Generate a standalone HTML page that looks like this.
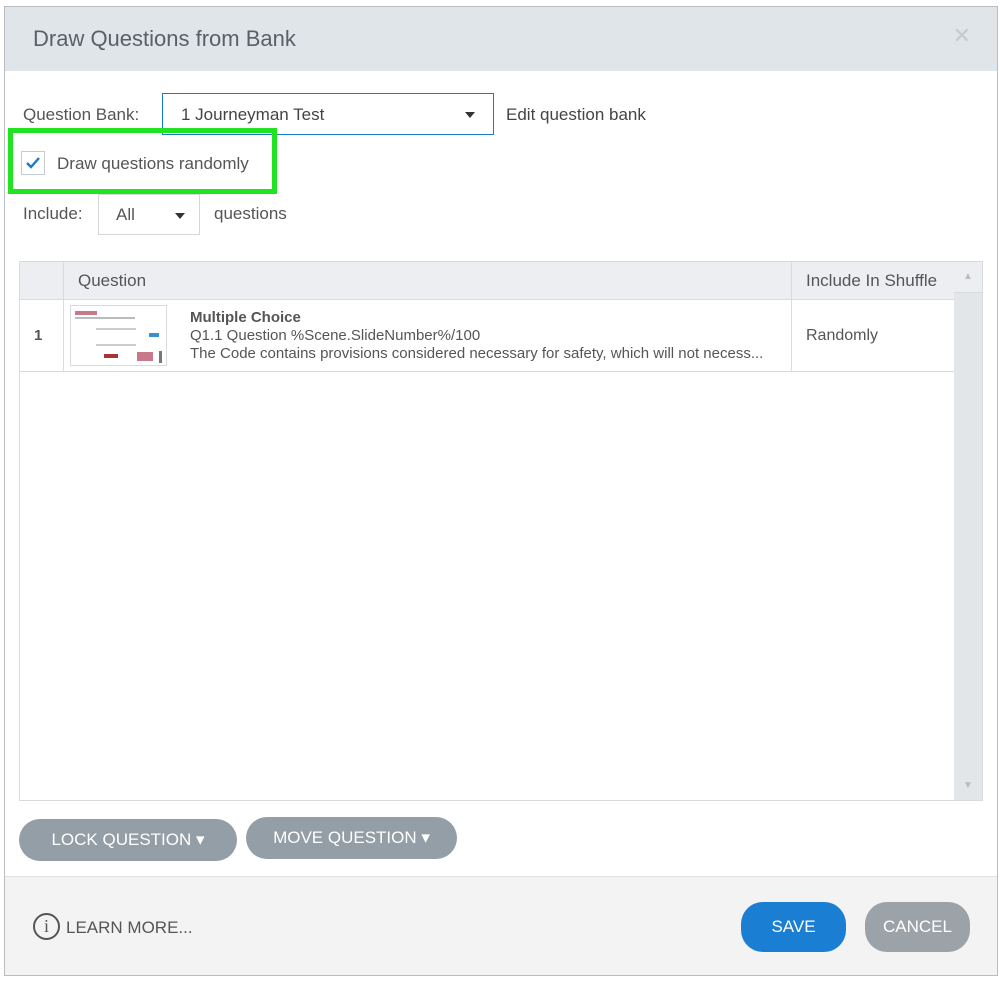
<!DOCTYPE html>
<html><head><style>
*{box-sizing:border-box;margin:0;padding:0}
body{width:999px;height:982px;background:#fff;font-family:"Liberation Sans",sans-serif;position:relative;overflow:hidden;color:#444}
.dlg{position:absolute;left:4px;top:6px;width:994px;height:970px;border:1px solid #b9bdc1;background:#fff}
.hdr{position:absolute;left:0;top:0;right:0;height:64px;background:#e0e5e9}
.ttl{position:absolute;left:28px;top:19px;font-size:22px;color:#5a6066}
.x{position:absolute;right:26px;top:16px;font-size:22px;color:#c5cacf}
.a{position:absolute}
.lbl{font-size:17px;color:#555}
.sel{position:absolute;border:1px solid #1a7ac9;background:#fff}
.tri{position:absolute;width:0;height:0;border-left:5px solid transparent;border-right:5px solid transparent;border-top:6px solid #333}
.tbl{position:absolute;width:964px;height:540px;border:1px solid #d8dbde;background:#fff}
.btn{position:absolute;border-radius:22px;color:#fff;font-size:17px;text-align:center}
.foot{position:absolute;left:0;top:869px;right:0;bottom:0;background:#f3f3f3;border-top:1px solid #e2e2e2}
</style></head><body>
<div class="dlg">
<div class="hdr"><div class="ttl">Draw Questions from Bank</div><div class="x">✕</div></div>
<div class="a lbl" style="left:18px;top:98px">Question Bank:</div>
<div class="sel" style="left:157px;top:86px;width:332px;height:42px"><span class="a lbl" style="left:18px;top:11px;color:#444">1 Journeyman Test</span><div class="tri" style="left:302px;top:18px"></div></div>
<div class="a lbl" style="left:501px;top:98px;color:#444">Edit question bank</div>
<div class="a" style="left:3px;top:121px;width:269px;height:66px;border:5px solid #22e322"></div>
<div class="a" style="left:16px;top:144px;width:24px;height:24px;border:1px solid #c7cbcf;background:#fff"><svg width="22" height="22" viewBox="0 0 22 22"><path d="M5 11 L9 15 L17 6" stroke="#1a7ac9" stroke-width="2.4" fill="none"/></svg></div>
<div class="a lbl" style="left:52px;top:147px;color:#555">Draw questions randomly</div>
<div class="a lbl" style="left:18px;top:197px">Include:</div>
<div class="sel" style="left:93px;top:187px;width:102px;height:41px;border-color:#d5d8db"><span class="a lbl" style="left:17px;top:10px">All</span><div class="tri" style="left:76px;top:18px"></div></div>
<div class="a lbl" style="left:209px;top:197px">questions</div>
<div class="tbl" style="left:14px;top:254px">
<div class="a" style="left:0;top:0;width:934px;height:38px;background:#eceef1;border-bottom:1px solid #d8dbde"></div>
<div class="a" style="left:43px;top:0;width:1px;height:110px;background:#d8dbde"></div>
<div class="a" style="left:771px;top:0;width:1px;height:110px;background:#d8dbde"></div>
<div class="a" style="left:0;top:109px;width:934px;height:1px;background:#d8dbde"></div>
<div class="a lbl" style="left:58px;top:9px;color:#555">Question</div>
<div class="a lbl" style="left:786px;top:9px;color:#555">Include In Shuffle</div>
<div class="a" style="left:934px;top:0;width:28px;height:538px;background:#e3e6e9"><div class="a" style="left:0;top:0;width:28px;height:31px;background:#eceef1;border-bottom:1px solid #d8dbde;color:#bbb;font-size:10px;text-align:center;line-height:30px">▲</div><div class="a" style="left:0;bottom:0;width:28px;height:28px;color:#bbb;font-size:10px;text-align:center;line-height:28px">▼</div></div>
<div class="a" style="left:14px;top:65px;font-size:15px;font-weight:bold;color:#555">1</div>
<div class="a" style="left:50px;top:43px;width:97px;height:61px;border:1px solid #d8dbde;background:#fff">
<div class="a" style="left:4px;top:5px;width:22px;height:4px;background:#c87888"></div>
<div class="a" style="left:4px;top:11px;width:60px;height:2px;background:#bbb"></div>
<div class="a" style="left:25px;top:22px;width:40px;height:2px;background:#ccc"></div>
<div class="a" style="left:78px;top:27px;width:10px;height:4px;background:#3a8fd0"></div>
<div class="a" style="left:25px;top:38px;width:40px;height:2px;background:#ccc"></div>
<div class="a" style="left:33px;top:48px;width:14px;height:4px;background:#a33"></div>
<div class="a" style="left:66px;top:46px;width:16px;height:9px;background:#c87888"></div>
<div class="a" style="left:88px;top:45px;width:3px;height:12px;background:#777"></div>
</div>
<div class="a" style="left:170px;top:47px;font-size:15px;font-weight:bold;color:#555">Multiple Choice</div>
<div class="a" style="left:170px;top:65px;font-size:15px;color:#555">Q1.1 Question %Scene.SlideNumber%/100</div>
<div class="a" style="left:170px;top:83px;font-size:15px;color:#555;width:596px;white-space:nowrap;overflow:hidden">The Code contains provisions considered necessary for safety, which will not necess...</div>
<div class="a" style="left:786px;top:65px;font-size:16px;color:#555">Randomly</div>
</div>
<div class="btn" style="left:14px;top:812px;width:218px;height:42px;line-height:42px;background:#939ea6">LOCK QUESTION ▾</div>
<div class="btn" style="left:241px;top:810px;width:211px;height:42px;line-height:42px;background:#939ea6">MOVE QUESTION ▾</div>
<div class="foot">
<div class="a" style="left:28px;top:36px;width:27px;height:27px;border:2px solid #555;border-radius:50%;text-align:center;font-family:'Liberation Serif',serif;font-size:18px;line-height:23px;color:#555">i</div>
<div class="a lbl" style="left:61px;top:41px;font-size:17px;color:#555">LEARN MORE...</div>
<div class="btn" style="left:736px;top:25px;width:105px;height:50px;line-height:50px;background:#1a7fd3">SAVE</div>
<div class="btn" style="left:860px;top:25px;width:105px;height:50px;line-height:50px;background:#9ba3a9">CANCEL</div>
</div>
</div>
</body></html>
